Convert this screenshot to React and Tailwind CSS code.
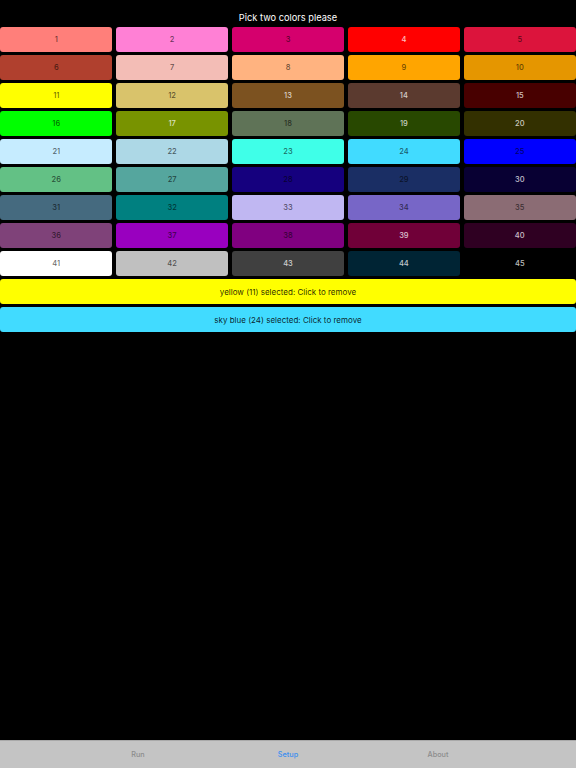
import React, { useState } from 'react';

const COLORS = [
  { n: 1, bg: '#ff7f7a', light: false },
  { n: 2, bg: '#ff80d5', light: false },
  { n: 3, bg: '#d5006d', light: false },
  { n: 4, bg: '#ff0000', light: true },
  { n: 5, bg: '#dc143c', light: false },
  { n: 6, bg: '#b0402e', light: false },
  { n: 7, bg: '#f3bdb6', light: false },
  { n: 8, bg: '#ffb380', light: false },
  { n: 9, bg: '#ffa500', light: false },
  { n: 10, bg: '#e59600', light: false },
  { n: 11, bg: '#ffff00', light: false, name: 'yellow' },
  { n: 12, bg: '#d9c36b', light: false },
  { n: 13, bg: '#7c5220', light: true },
  { n: 14, bg: '#5b3a2f', light: true },
  { n: 15, bg: '#480000', light: true },
  { n: 16, bg: '#00ff00', light: false },
  { n: 17, bg: '#789300', light: true },
  { n: 18, bg: '#5f7357', light: false },
  { n: 19, bg: '#284800', light: true },
  { n: 20, bg: '#333000', light: true },
  { n: 21, bg: '#c6ecff', light: false },
  { n: 22, bg: '#add8e6', light: false },
  { n: 23, bg: '#3fffe8', light: false },
  { n: 24, bg: '#41dbff', light: false, name: 'sky blue' },
  { n: 25, bg: '#0000ff', light: false },
  { n: 26, bg: '#63c185', light: false },
  { n: 27, bg: '#55a69e', light: false },
  { n: 28, bg: '#15007e', light: false },
  { n: 29, bg: '#1a2e64', light: false },
  { n: 30, bg: '#080033', light: true },
  { n: 31, bg: '#456a7f', light: false },
  { n: 32, bg: '#008080', light: false },
  { n: 33, bg: '#c0b7f2', light: false },
  { n: 34, bg: '#7766c7', light: false },
  { n: 35, bg: '#8b6c74', light: false },
  { n: 36, bg: '#7f4279', light: false },
  { n: 37, bg: '#9900bf', light: false },
  { n: 38, bg: '#800080', light: false },
  { n: 39, bg: '#700038', light: true },
  { n: 40, bg: '#2f0022', light: true },
  { n: 41, bg: '#ffffff', light: false },
  { n: 42, bg: '#c0c0c0', light: false },
  { n: 43, bg: '#404040', light: true },
  { n: 44, bg: '#002434', light: true },
  { n: 45, bg: '#000000', light: true },
];

const App = () => {
  const [selected, setSelected] = useState([11, 24]);

  const toggle = (n) => {
    if (selected.includes(n)) {
      setSelected(selected.filter((s) => s !== n));
    } else if (selected.length < 2) {
      setSelected([...selected, n]);
    }
  };

  return (
    <div
      className="h-screen bg-black flex flex-col"
      style={{ fontFamily: 'Inter, "Liberation Sans", sans-serif' }}
    >
      <div className="flex-1">
        {/* Title */}
        <div className="h-[27px] pt-[12px] text-center text-white text-[9.25px] leading-[12px]">
          Pick two colors please
        </div>

        {/* Color grid */}
        <div className="grid grid-cols-5 gap-x-[3.4px] gap-y-[3px]">
          {COLORS.map((c) => (
            <button
              key={c.n}
              onClick={() => toggle(c.n)}
              className={`h-[25px] rounded-[3px] flex items-center justify-center text-[7.5px] font-medium ${
                c.light ? 'text-white/75' : 'text-black/60'
              }`}
              style={{ backgroundColor: c.bg }}
            >
              {c.n}
            </button>
          ))}
        </div>

        {/* Selected colors */}
        <div className="mt-[3px] flex flex-col gap-[3px]">
          {selected.map((n) => {
            const c = COLORS.find((x) => x.n === n);
            return (
              <button
                key={n}
                onClick={() => toggle(n)}
                className="h-[25px] w-full rounded-[3px] text-[8px] text-black/85"
                style={{ backgroundColor: c.bg }}
              >
                {(c.name || 'color') + ' (' + n + ') selected: Click to remove'}
              </button>
            );
          })}
        </div>
      </div>

      {/* Tab bar */}
      <div className="h-[28px] pt-[1px] bg-[#c4c4c4] border-t border-[#a9a9a9] flex justify-center items-center">
        <div className="w-[150px] text-center text-[7.25px] font-medium text-[#8c8c8c]">Run</div>
        <div className="w-[150px] text-center text-[7.25px] font-medium text-[#3a8ef0]">Setup</div>
        <div className="w-[150px] text-center text-[7.25px] font-medium text-[#8c8c8c]">About</div>
      </div>
    </div>
  );
};

export default App;
